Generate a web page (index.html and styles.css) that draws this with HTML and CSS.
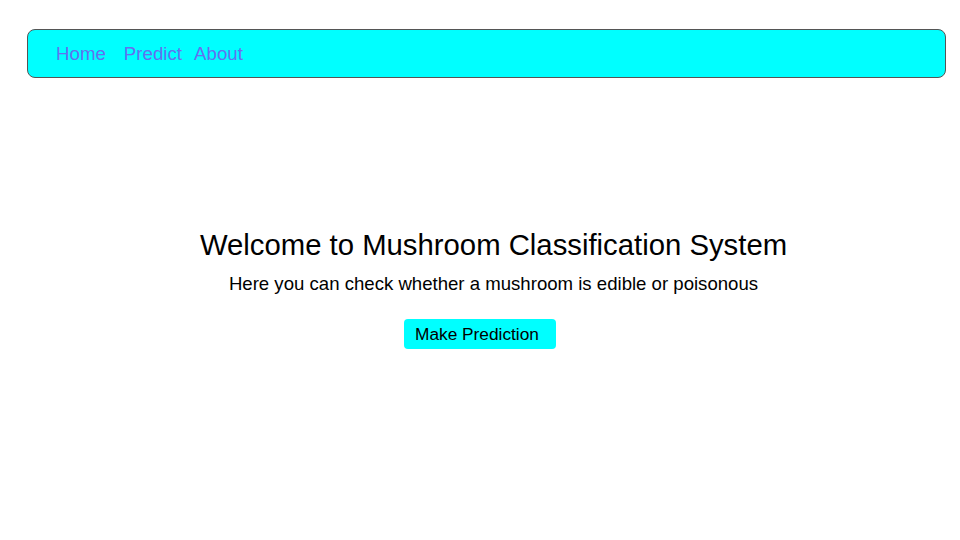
FILE: index.html
```html
<!DOCTYPE html>
<html>
<head>
<meta charset="utf-8">
<link rel="stylesheet" href="styles.css">
</head>
<body>
<nav class="nav">
  <a class="nav-link home" href="#">Home</a>
  <a class="nav-link predict" href="#">Predict</a>
  <a class="nav-link" href="#">About</a>
</nav>
<main class="hero">
  <div class="hero-text">
    <h1 class="title">Welcome to Mushroom Classification System</h1>
    <p class="subtitle">Here you can check whether a mushroom is edible or poisonous</p>
  </div>
  <div class="actions">
    <button class="btn">Make Prediction</button>
  </div>
</main>
</body>
</html>
```
FILE: styles.css
```css
html, body {
  margin: 0;
  padding: 0;
  background: #fff;
  font-family: "Liberation Sans", Arial, sans-serif;
}
body {
  padding: 29px 14px 0 27px;
}
.nav {
  display: flex;
  align-items: center;
  height: 47px;
  background: #00ffff;
  border: 1px solid #555;
  border-radius: 8px;
  padding-left: 28px;
}
.nav-link {
  font-size: 18.7px;
  color: #6470f0;
  text-decoration: none;
}
.home { margin-right: 18px; }
.predict { margin-right: 12px; }
.hero {
  margin-top: 150px;
}
.hero-text {
  text-align: center;
  margin-right: -14px;
}
.title {
  margin: 0;
  font-size: 29.3px;
  font-weight: normal;
  line-height: 34px;
  color: #000;
}
.subtitle {
  margin: 11px 0 0;
  font-size: 18.6px;
  line-height: 22px;
  color: #000;
}
.actions {
  display: flex;
  justify-content: center;
  margin: 24px -14px 0 -27px;
}
.btn {
  font-family: "Liberation Sans", Arial, sans-serif;
  font-size: 17.3px;
  background: #00ffff;
  color: #000;
  border: none;
  border-radius: 4px;
  width: 152px;
  height: 30px;
  padding: 0 0 0 11px;
  text-align: left;
}
```
